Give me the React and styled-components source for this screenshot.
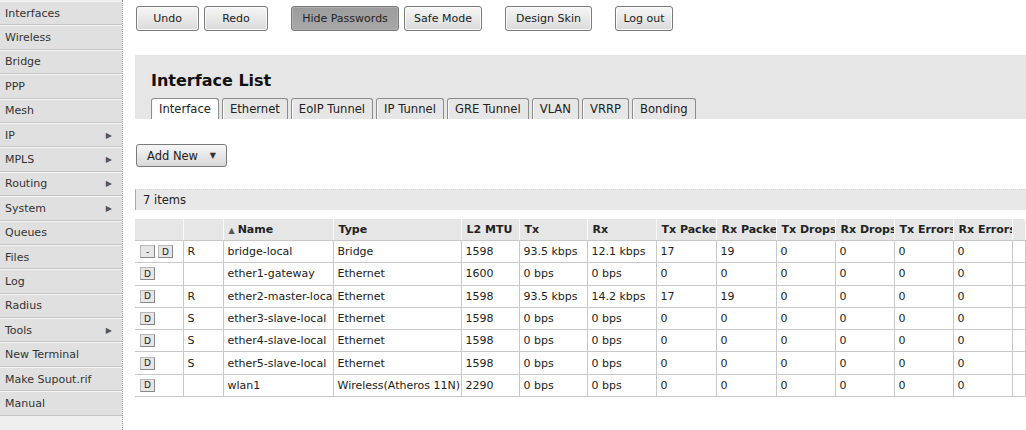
import React from "react";
import styled, { createGlobalStyle } from "styled-components";

const GlobalStyle = createGlobalStyle`
  html, body {
    margin: 0;
    padding: 0;
    background: #ffffff;
    font-family: "DejaVu Sans", Verdana, sans-serif;
    font-size: 11px;
    color: #222;
  }
`;

const menu = [
  { label: "Interfaces" },
  { label: "Wireless" },
  { label: "Bridge" },
  { label: "PPP" },
  { label: "Mesh" },
  { label: "IP", sub: true },
  { label: "MPLS", sub: true },
  { label: "Routing", sub: true },
  { label: "System", sub: true },
  { label: "Queues" },
  { label: "Files" },
  { label: "Log" },
  { label: "Radius" },
  { label: "Tools", sub: true },
  { label: "New Terminal" },
  { label: "Make Supout.rif" },
  { label: "Manual" },
];

const tabs = [
  "Interface",
  "Ethernet",
  "EoIP Tunnel",
  "IP Tunnel",
  "GRE Tunnel",
  "VLAN",
  "VRRP",
  "Bonding",
];

const columns = [
  { w: 48, label: "" },
  { w: 40, label: "" },
  { w: 110, label: "Name", sorted: true },
  { w: 128, label: "Type" },
  { w: 58, label: "L2 MTU" },
  { w: 68, label: "Tx" },
  { w: 69, label: "Rx" },
  { w: 60, label: "Tx Packets" },
  { w: 60, label: "Rx Packets" },
  { w: 59, label: "Tx Drops" },
  { w: 59, label: "Rx Drops" },
  { w: 59, label: "Tx Errors" },
  { w: 59, label: "Rx Errors" },
];

const rows = [
  { minus: true, flag: "R", name: "bridge-local", type: "Bridge", mtu: "1598", tx: "93.5 kbps", rx: "12.1 kbps", txp: "17", rxp: "19" },
  { flag: "", name: "ether1-gateway", type: "Ethernet", mtu: "1600", tx: "0 bps", rx: "0 bps", txp: "0", rxp: "0" },
  { flag: "R", name: "ether2-master-local", type: "Ethernet", mtu: "1598", tx: "93.5 kbps", rx: "14.2 kbps", txp: "17", rxp: "19" },
  { flag: "S", name: "ether3-slave-local", type: "Ethernet", mtu: "1598", tx: "0 bps", rx: "0 bps", txp: "0", rxp: "0" },
  { flag: "S", name: "ether4-slave-local", type: "Ethernet", mtu: "1598", tx: "0 bps", rx: "0 bps", txp: "0", rxp: "0" },
  { flag: "S", name: "ether5-slave-local", type: "Ethernet", mtu: "1598", tx: "0 bps", rx: "0 bps", txp: "0", rxp: "0" },
  { flag: "", name: "wlan1", type: "Wireless(Atheros 11N)", mtu: "2290", tx: "0 bps", rx: "0 bps", txp: "0", rxp: "0" },
];

function App() {
  return (
    <>
      <GlobalStyle />
      <Page>
        <Sidebar>
          {menu.map((m) => (
            <MenuItem key={m.label}>
              <span>{m.label}</span>
              {m.sub && <Arrow>&#9654;</Arrow>}
            </MenuItem>
          ))}
        </Sidebar>

        <Main>
          <Toolbar>
            <Group>
              <Button w={63}>Undo</Button>
              <Button w={64}>Redo</Button>
            </Group>
            <Group>
              <Button w={108} pressed>
                Hide Passwords
              </Button>
              <Button w={78}>Safe Mode</Button>
            </Group>
            <Group>
              <Button w={87}>Design Skin</Button>
            </Group>
            <Group>
              <Button w={58}>Log out</Button>
            </Group>
          </Toolbar>

          <Header>
            <Title>Interface List</Title>
            <Tabs>
              {tabs.map((t, i) => (
                <Tab key={t} active={i === 0}>
                  {t}
                </Tab>
              ))}
            </Tabs>
          </Header>

          <AddNew>
            <span>Add New</span>
            <Caret>&#9660;</Caret>
          </AddNew>

          <ItemsBar>7 items</ItemsBar>

          <Table>
            <colgroup>
              {columns.map((c, i) => (
                <col key={i} style={{ width: c.w }} />
              ))}
              <col />
            </colgroup>
            <thead>
              <tr>
                {columns.map((c, i) => (
                  <Th key={i}>
                    {c.sorted && <Sort>&#9650;</Sort>}
                    {c.label}
                  </Th>
                ))}
                <Th />
              </tr>
            </thead>
            <tbody>
              {rows.map((r) => (
                <tr key={r.name}>
                  <Td>
                    <MiniRow>
                      {r.minus && <Mini>-</Mini>}
                      <Mini>D</Mini>
                    </MiniRow>
                  </Td>
                  <Td>{r.flag}</Td>
                  <Td>{r.name}</Td>
                  <Td>{r.type}</Td>
                  <Td>{r.mtu}</Td>
                  <Td>{r.tx}</Td>
                  <Td>{r.rx}</Td>
                  <Td>{r.txp}</Td>
                  <Td>{r.rxp}</Td>
                  <Td>0</Td>
                  <Td>0</Td>
                  <Td>0</Td>
                  <Td>0</Td>
                  <Td />
                </tr>
              ))}
            </tbody>
          </Table>
        </Main>
      </Page>
    </>
  );
}

export default App;

const Page = styled.div`
  display: flex;
  width: 1026px;
  height: 430px;
  overflow: hidden;
`;

const Sidebar = styled.div`
  width: 122px;
  flex: none;
  background: #efefef;
  border-right: 1px dotted #999;
  padding-top: 1px;
`;

const MenuItem = styled.div`
  box-sizing: border-box;
  height: 24.4px;
  display: flex;
  align-items: center;
  justify-content: space-between;
  padding: 0 10px 0 5px;
  background: #e0e0e0;
  border-top: 1px solid #f6f6f6;
  border-bottom: 1px solid #c4c4c4;
  color: #333;
`;

const Arrow = styled.span`
  font-size: 8px;
  color: #555;
`;

const Main = styled.div`
  flex: 1;
  min-width: 0;
  padding-left: 12px;
`;

const Toolbar = styled.div`
  display: flex;
  padding: 6px 0 0 1px;
  gap: 23px;
`;

const Group = styled.div`
  display: flex;
  gap: 5px;
`;

const Button = styled.div`
  box-sizing: border-box;
  width: ${(p) => p.w}px;
  height: 25px;
  display: flex;
  align-items: center;
  justify-content: center;
  border: 1px solid #7a7a7a;
  border-radius: 3px;
  color: #222;
  background: ${(p) =>
    p.pressed
      ? "linear-gradient(#9c9c9c, #a8a8a8)"
      : "linear-gradient(#f6f6f6, #dadada)"};
  box-shadow: inset 0 0 0 1px ${(p) => (p.pressed ? "#b0b0b0" : "#fbfbfb")};
`;

const Header = styled.div`
  margin-top: 24px;
  background: #e6e6e6;
  padding: 16px 0 0 16px;
  height: 64px;
  box-sizing: border-box;
  display: flex;
  flex-direction: column;
`;

const Title = styled.div`
  font-weight: bold;
  font-size: 16px;
  line-height: 20px;
  color: #111;
`;

const Tabs = styled.div`
  display: flex;
  gap: 3px;
  margin-top: auto;
`;

const Tab = styled.div`
  box-sizing: border-box;
  height: 21px;
  padding: 0 7px;
  display: flex;
  align-items: center;
  border: 1px solid #8c8c8c;
  border-bottom: none;
  border-radius: 3px 3px 0 0;
  box-shadow: inset 1px 0 0 #fafafa;
  font-size: 11.6px;
  background: ${(p) => (p.active ? "#ffffff" : "#e6e6e6")};
  color: #222;
`;

const AddNew = styled.div`
  box-sizing: border-box;
  margin: 25px 0 0 1px;
  width: 91px;
  height: 23px;
  display: flex;
  align-items: center;
  padding: 0 10px;
  justify-content: space-between;
  border: 1px solid #7a7a7a;
  border-radius: 3px;
  background: linear-gradient(#f6f6f6, #d8d8d8);
  font-size: 11.5px;
`;

const Caret = styled.span`
  font-size: 8px;
  color: #333;
`;

const ItemsBar = styled.div`
  margin-top: 22px;
  height: 21px;
  box-sizing: border-box;
  display: flex;
  align-items: center;
  padding-left: 7px;
  background: #e8e8e8;
  border-left: 1px solid #aaa;
  border-top: 1px dotted #d0d0d0;
  font-size: 11.5px;
`;

const Table = styled.table`
  margin-top: 9px;
  width: 100%;
  table-layout: fixed;
  border-collapse: collapse;
`;

const Th = styled.th`
  height: 21px;
  padding: 0 0 0 5px;
  text-align: left;
  font-weight: bold;
  background: #e6e6e6;
  border-right: 1px solid #fafafa;
  border-bottom: 1px solid #c8c8c8;
  white-space: nowrap;
  overflow: hidden;
  color: #222;
`;

const Sort = styled.span`
  font-size: 8px;
  color: #555;
  margin-right: 3px;
`;

const Td = styled.td`
  height: 21.3px;
  padding: 0 0 0 4px;
  border: 1px solid #c8c8c8;
  border-top: none;
  border-left: none;
  white-space: nowrap;
  overflow: hidden;
  font-size: 11px;
`;

const MiniRow = styled.div`
  display: flex;
  gap: 3px;
  padding-left: 1px;
`;

const Mini = styled.span`
  box-sizing: border-box;
  width: 15px;
  height: 13px;
  display: flex;
  align-items: center;
  justify-content: center;
  font-size: 9px;
  background: #e6e6e6;
  border: 1px solid #b8b8b8;
  border-right-color: #888;
  border-bottom-color: #888;
`;
